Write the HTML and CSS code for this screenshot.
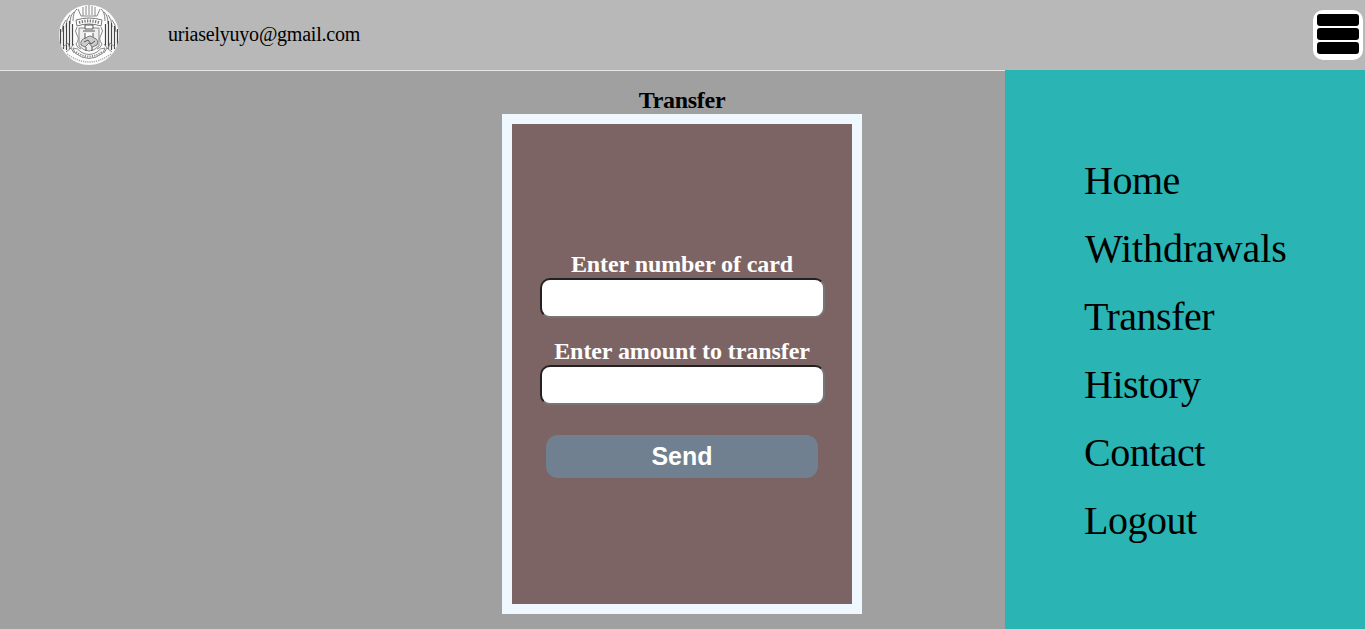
FILE: index.html
```html
<!DOCTYPE html>
<html lang="en">
<head>
<meta charset="utf-8">
<title>Transfer</title>
<link rel="stylesheet" href="styles.css">
</head>
<body>
<header class="header">
  <svg class="logo" viewBox="0 0 62 62" aria-hidden="true">
    <defs>
      <clipPath id="disc"><circle cx="31" cy="31" r="30"/></clipPath>
      <g id="wing" fill="none">
        <path d="M19 5q-4 3-4 12M16 8q-4 3-4 12M12 11q-4 4-4 12M8 16q-4 4-4 12" stroke="#777" stroke-width=".9"/>
        <path d="M2.500 25v17M5.500 22v23M8.500 19v27M11.500 17v28M14.500 20v22" stroke="#444" stroke-width="1.2"/>
        <path d="M5 43l5-4 2 6 4-5M8 48l5-4 3 5" stroke="#888"/>
        <path d="M19 23q-3 4 0 8t-1 9q1 4 5 5" stroke="#888"/>
      </g>
    </defs>
    <circle cx="31" cy="31" r="30" fill="#fcfcfc"/>
    <g clip-path="url(#disc)">
      <use href="#wing"/>
      <use href="#wing" transform="matrix(-1 0 0 1 62 0)"/>
      <path d="M20 5l3 7M42 5l-3 7M25 3v9M28 2v9M31 1v10M34 2v9M37 3v9M23 12h16" fill="none" stroke="#888"/>
      <path d="M18 16q13-4 26 0l-1 6q-12-4-24 0z" fill="#fff" stroke="#777"/>
      <path d="M21 18.500q10-3 20 0" fill="none" stroke="#777" stroke-width="3" stroke-dasharray="1.3 1.4"/>
      <path d="M21 24h20v18q-10 10-20 0z" fill="#eee" stroke="#888"/>
      <path d="M27 21h8v4h-8zM25 27h12M27 29v5h8v-5" fill="#fff" stroke="#555"/>
      <path d="M23 41q-1-6 5-7 4-4 8 0 5 1 3 7l-5 2-3-4-4 4z" fill="#ccc" stroke="#777"/>
      <path d="M26 38l4-2 3 4 4-3M28 43v4M34 43v4" fill="none" stroke="#555"/>
      <path d="M15 44q5 0 8 4 8 5 16 0 3-4 8-4l-2 5q-14 11-28 0z" fill="#fff" stroke="#888"/>
      <path d="M18 48q13 9 26 0" fill="none" stroke="#888" stroke-width="2" stroke-dasharray="1.2 1.2"/>
    </g>
    <path d="M9 50q22 16 44 0" fill="none" stroke="#aaa" stroke-width="1.5" stroke-dasharray="1.2 1"/>
  </svg>
  <span class="email">uriaselyuyo@gmail.com</span>
  <button class="menu-toggle" aria-label="Menu"><span class="bar"></span><span class="bar"></span><span class="bar"></span></button>
</header>
<div class="content">
  <main class="main">
    <h1 class="title">Transfer</h1>
    <form class="form">
      <label class="label" for="card">Enter number of card</label>
      <input class="input" id="card">
      <label class="label" for="amount">Enter amount to transfer</label>
      <input class="input" id="amount">
      <button class="send" type="button">Send</button>
    </form>
  </main>
  <nav class="nav">
    <a class="link">Home</a>
    <a class="link link-wide">Withdrawals</a>
    <a class="link">Transfer</a>
    <a class="link">History</a>
    <a class="link">Contact</a>
    <a class="link">Logout</a>
  </nav>
</div>
</body>
</html>
```

FILE: styles.css
```css
* { box-sizing: border-box; }
body {
  margin: 0;
  height: 629px;
  overflow: hidden;
  background: #a0a0a0;
  font-family: "Liberation Serif", "Times New Roman", serif;
  color: #000;
}
.header {
  display: flex;
  align-items: center;
  height: 70px;
  padding: 0 2px 0 58px;
  background: #b8b8b8;
}
.logo { width: 62px; height: 62px; }
.email {
  margin-left: 48px;
  padding-bottom: 2px;
  font-size: 20px;
  line-height: 24px;
  letter-spacing: -0.22px;
}
.menu-toggle {
  display: flex;
  flex-direction: column;
  gap: 2px;
  width: 50px;
  height: 50px;
  margin-left: auto;
  padding: 4px;
  border: 0;
  border-radius: 10px;
  background: #fff;
}
.bar { width: 42px; height: 12px; border-radius: 3px; background: #000; }
.content { display: flex; height: 559px; }
.main {
  width: 1005px;
  padding: 16px 0 0 502px;
  border-top: 1px solid #e6e6e6;
}
.title {
  width: 360px;
  margin: 0 0 1px;
  font-size: 24px;
  line-height: 26px;
  letter-spacing: -0.3px;
  text-align: center;
}
.form {
  display: flex;
  flex-direction: column;
  align-items: center;
  width: 360px;
  height: 500px;
  padding-top: 127px;
  border: 10px solid aliceblue;
  background: #7d6464;
}
.label {
  color: #fff;
  font-size: 24px;
  font-weight: bold;
  line-height: 27px;
  letter-spacing: -0.08px;
}
.input {
  width: 285px;
  height: 40px;
  margin-bottom: 20px;
  border: 2px inset #767676;
  border-radius: 10px;
  background: #fff;
}
.send {
  width: 272px;
  height: 43px;
  margin-top: 10px;
  border: 0;
  border-radius: 12px;
  background: slategray;
  color: #fff;
  font: bold 25px "Liberation Sans", Arial, sans-serif;
}
.nav {
  display: flex;
  flex-direction: column;
  width: 360px;
  padding: 77px 0 0 79px;
  background: #2ab4b4;
}
.link { font-size: 40px; line-height: 68px; letter-spacing: -0.5px; }
.link-wide { padding-left: 1px; letter-spacing: -0.1px; }
```
